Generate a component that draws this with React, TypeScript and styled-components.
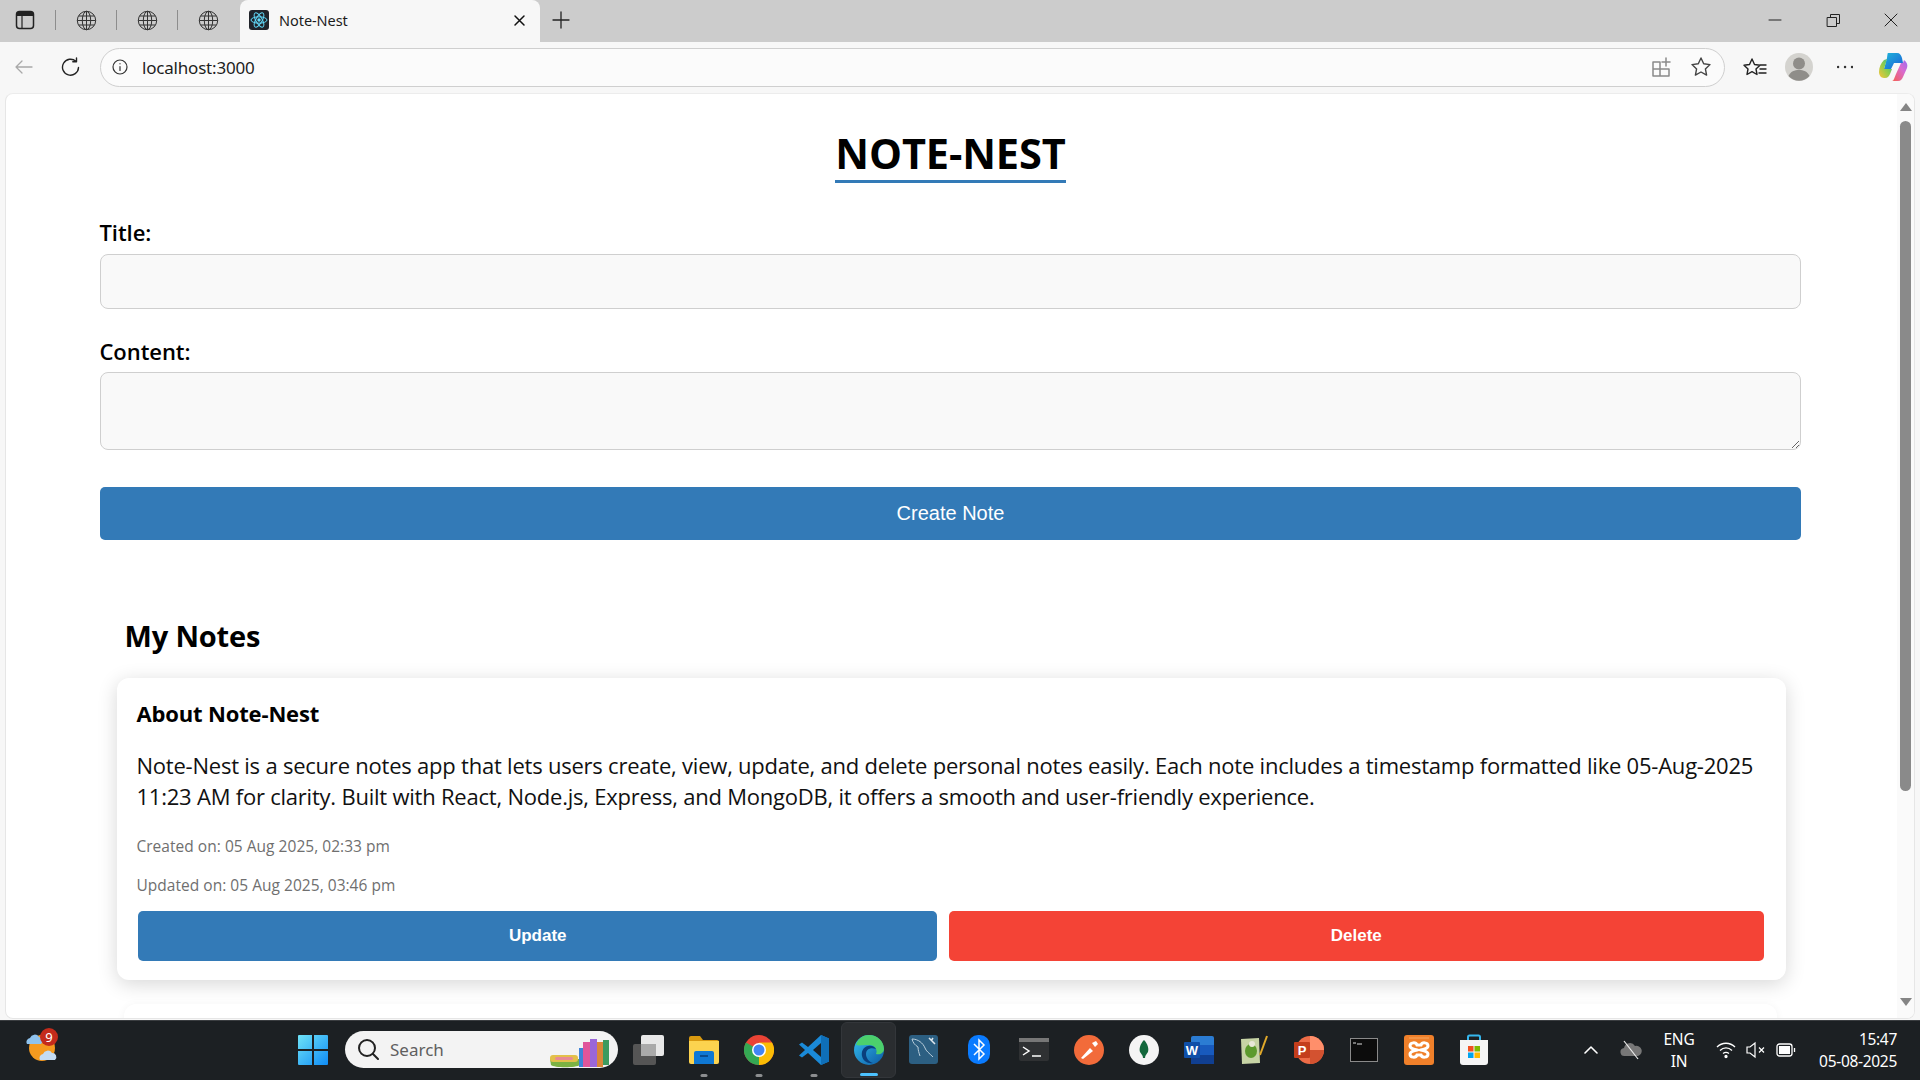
import React from "react";
import styled, { createGlobalStyle } from "styled-components";

const GlobalStyle = createGlobalStyle`
  html, body { margin: 0; padding: 0; width: 1920px; height: 1080px; overflow: hidden; background: #f7f7f7; }
  * { box-sizing: border-box; }
`;

const uiFont = `"Open Sans", "Noto Sans", sans-serif`;
const sysFont = `"Noto Sans", "Open Sans", sans-serif`;
const armFont = `"Liberation Sans", Arial, sans-serif`;

const Screen = styled.div`
  width: 1920px; height: 1080px; display: flex; flex-direction: column; overflow: hidden;
`;

/* tab strip */
const TabStrip = styled.div`
  height: 42px; flex: none; background: #cccccc; display: flex; align-items: stretch; position: relative;
`;
const StripSlot = styled.div<{ $w: number }>`
  width: ${(p) => p.$w}px; flex: none; display: flex; align-items: center; justify-content: center; height: 40px;
`;
const SidebarSlot = styled(StripSlot)`
  padding-right: 5px;
`;
const StripDivider = styled.div`
  width: 1px; height: 20px; background: #8d8d8d; flex: none; align-self: center; margin-bottom: 2px;
`;
const ActiveTab = styled.div`
  width: 300px; height: 42px; flex: none; background: #f7f7f7; border-radius: 8px 8px 0 0; display: flex; align-items: center;
  padding: 0 14px 2px 9px; margin-left: 2px;
`;
const TabTitle = styled.span`
  font: 400 14.5px ${sysFont}; color: #1c1c1c; margin-left: 10px; flex: 1; letter-spacing: -0.05px;
`;
const WindowControls = styled.div`
  margin-left: auto; display: flex; height: 40px; align-items: center; padding-right: 0;
`;
const WindowButton = styled.div`
  width: 58px; display: flex; align-items: center; justify-content: center;
`;

/* toolbar */
const Toolbar = styled.div`
  height: 51px; flex: none; background: #f7f7f7; display: flex; align-items: center; padding: 0 0 1px 0;
`;
const ToolButton = styled.div<{ $w: number }>`
  width: ${(p) => p.$w}px; flex: none; display: flex; align-items: center; justify-content: center;
`;
const AddressBar = styled.div`
  width: 1625px; height: 39px; flex: none; margin-left: 6px; border: 1.5px solid #cfcfcf; border-radius: 20px; background: #fbfbfb;
  display: flex; align-items: center; padding: 0 3px 0 11px;
`;
const Url = styled.span`
  font: 400 17px ${sysFont}; color: #1e1e1e; margin-left: 14px; flex: 1; letter-spacing: -0.2px;
`;

/* viewport */
const ViewportFrame = styled.div`
  flex: none; height: 926px; margin: 0 5px 0 5px; background: #fff; border-radius: 8px; border: 1px solid #e6e6e6; border-top-color: #ececec;
  display: flex; overflow: hidden;
`;
const Page = styled.main`
  flex: 1; min-width: 0; overflow: hidden; display: flex; flex-direction: column; align-items: center; padding: 36px 2px 0 0;
`;
const Container = styled.div`
  width: 90%; display: flex; flex-direction: column; color: #000; font-family: ${uiFont};
`;
const Scrollbar = styled.div`
  width: 17px; flex: none; background: #fafafa; display: flex; flex-direction: column; align-items: center; padding-top: 9px;
`;
const ScrollThumb = styled.div`
  width: 11px; height: 670px; margin-top: 10px; background: #8a8a8a; border-radius: 6px; flex: none;
`;
const ScrollArrow = styled.div<{ $down?: boolean }>`
  width: 0; height: 0; flex: none; border-left: 6.5px solid transparent; border-right: 6.5px solid transparent;
  ${(p) => (p.$down ? "border-top: 8px solid #858585; margin-top: auto; margin-bottom: 12px;" : "border-bottom: 8px solid #858585;")}
`;
const TitleRow = styled.div`
  display: flex; justify-content: center;
`;
const Heading = styled.h1`
  margin: 0; font: 700 41.5px/47px ${uiFont}; letter-spacing: -0.1px; border-bottom: 3px solid #337ab7; padding-bottom: 3px; color: #000;
`;
const Label = styled.label<{ $top: number }>`
  display: block; margin-top: ${(p) => p.$top}px; font: 600 22px/28px ${uiFont}; letter-spacing: -0.05px; color: #000; margin-left: -1px;
`;
const TextInput = styled.input`
  display: block; width: 100%; height: 55px; margin-top: 8px; background: #f9f9f9; border: 1.5px solid #cfcfcf; border-radius: 8px; outline: none;
`;
const TextArea = styled.textarea`
  display: block; width: 100%; height: 78px; margin-top: 7px; background: #f9f9f9; border: 1.5px solid #cfcfcf; border-radius: 8px; outline: none; resize: vertical;
`;
const PrimaryButton = styled.button`
  display: block; width: 100%; height: 53px; margin-top: 37px; border: 0; border-radius: 5px; background: #337ab7; color: #fff; font: 400 20px ${armFont};
`;
const SectionTitle = styled.h2`
  margin: 76px 0 0 24px; font: 700 29px/40px ${uiFont}; letter-spacing: -0.15px; color: #000;
`;
const NoteCard = styled.article`
  margin: 22px 15px 0 17px; background: #fff; border-radius: 12px; padding: 20px 18px 19px 19px; box-shadow: 0 4px 20px rgba(0, 0, 0, 0.16);
`;
const GhostCard = styled.div`
  margin: 24px 24px 0; height: 60px; flex: none; background: #fff; border-radius: 12px; box-shadow: 0 1px 8px rgba(0, 0, 0, 0.05);
`;
const NoteTitle = styled.h3`
  margin: 0; font: 700 22px/30px ${uiFont}; letter-spacing: -0.15px; color: #000;
`;
const NoteBody = styled.p`
  margin: 22px 0 0; font: 400 22px/31px ${uiFont}; letter-spacing: -0.22px; color: #111;
`;
const Stamp = styled.p<{ $top: number }>`
  margin: ${(p) => p.$top}px 0 0; font: 400 15.5px/24px ${uiFont}; color: #6f6f6f; letter-spacing: 0.03px;
`;
const Actions = styled.div`
  display: grid; grid-template-columns: 799fr 815fr; gap: 12px; margin: 14px 0 0 2px; padding-right: 4px;
`;
const ActionButton = styled.button<{ $bg: string }>`
  height: 50px; border: 0; border-radius: 5px; background: ${(p) => p.$bg}; color: #fff; font: 700 17px ${armFont}; padding-bottom: 2px;
`;

/* taskbar */
const Taskbar = styled.footer`
  flex: 1; background: #1c2023; border-top: 1px solid #3a3d40; display: flex; align-items: center; margin-top: 1px; color: #fff; padding-bottom: 2px;
`;
const Weather = styled.div`
  width: 285px; flex: none; padding-left: 25px; display: flex; align-items: center; margin-bottom: 4px;
`;
const TaskSlot = styled.div<{ $active?: boolean }>`
  width: 55px; height: 56px; flex: none; display: flex; align-items: center; justify-content: center; position: relative; border-radius: 6px;
  ${(p) => p.$active && "background: #2a2d30; border: 1px solid #33363a;"}
`;
const RunDot = styled.span<{ $active?: boolean }>`
  position: absolute; bottom: 1px; left: 50%; transform: translateX(-50%); height: 3px; border-radius: 2px;
  width: ${(p) => (p.$active ? 18 : 7)}px; background: ${(p) => (p.$active ? "#4cc2ff" : "#8c8e90")};
`;
const SearchBox = styled.div`
  width: 273px; height: 37px; flex: none; margin: 0 3px 0 5px; border-radius: 19px; background: #f3f3f3; display: flex; align-items: center; padding-left: 13px; overflow: hidden; position: relative;
`;
const SearchText = styled.span`
  font: 400 17px ${sysFont}; color: #5f5f5f; margin-left: 11px; flex: 1;
`;
const Tray = styled.div`
  margin-left: auto; display: flex; align-items: center; color: #fff; padding-right: 23px;
`;
const TrayIcon = styled.div<{ $w: number }>`
  width: ${(p) => p.$w}px; flex: none; display: flex; align-items: center; justify-content: center;
  svg { flex: none; }
`;
const TrayText = styled.div`
  width: 48px; flex: none; text-align: center; font: 400 15.5px/22px ${sysFont}; letter-spacing: -0.2px;
`;
const Clock = styled.div`
  width: 88px; flex: none; text-align: right; font: 400 15.5px/22px ${sysFont}; letter-spacing: -0.3px;
`;

/* icons */
const Globe = () => (
  <svg width="21" height="21" viewBox="0 0 21 21" fill="none" stroke="#333" strokeWidth="1">
    <circle cx="10.5" cy="10.5" r="9.2" />
    <ellipse cx="10.5" cy="10.5" rx="4.2" ry="9.2" />
    <path d="M1.3 10.5h18.4M2.6 6h15.8M2.6 15h15.8M10.5 1.3v18.4" />
  </svg>
);
const SidebarIcon = () => (
  <svg width="20" height="20" viewBox="0 0 20 20" fill="none">
    <rect x="1.5" y="1.5" width="17" height="17" rx="3" stroke="#222" strokeWidth="1.5" />
    <path d="M2 2h16v4H2z" fill="#222" />
    <path d="M7 6v12" stroke="#222" strokeWidth="1.2" />
  </svg>
);
const ReactFav = () => (
  <svg width="20" height="20" viewBox="0 0 20 20" style={{ flex: "none" }}>
    <rect width="20" height="20" rx="3" fill="#20232a" />
    <g fill="none" stroke="#61dafb" strokeWidth="1">
      <ellipse cx="10" cy="10" rx="8" ry="3.2" />
      <ellipse cx="10" cy="10" rx="8" ry="3.2" transform="rotate(60 10 10)" />
      <ellipse cx="10" cy="10" rx="8" ry="3.2" transform="rotate(120 10 10)" />
    </g>
    <circle cx="10" cy="10" r="1.7" fill="#61dafb" />
  </svg>
);
const Line = ({ d, w = 16, h = 16, c = "#222", sw = 1.3 }: { d: string; w?: number; h?: number; c?: string; sw?: number }) => (
  <svg width={w} height={h} viewBox={`0 0 ${w} ${h}`} fill="none" stroke={c} strokeWidth={sw} strokeLinecap="round" strokeLinejoin="round" style={{ flex: "none" }}>
    <path d={d} />
  </svg>
);
const StarPath = "M11 2l2.7 5.8 6.3.8-4.6 4.3 1.2 6.2L11 16l-5.6 3.1 1.2-6.2L2 8.6l6.3-.8z";
const Copilot = () => (
  <svg width="30" height="30" viewBox="0 0 30 30">
    <defs>
      <linearGradient id="cpa" x1="0" y1="0" x2="1" y2="1"><stop offset="0" stopColor="#1fb6d9" /><stop offset="1" stopColor="#1a5fd8" /></linearGradient>
      <linearGradient id="cpb" x1="0" y1="1" x2="1" y2="0"><stop offset="0" stopColor="#f8c43a" /><stop offset=".5" stopColor="#8fce4c" /><stop offset="1" stopColor="#27b3a5" /></linearGradient>
      <linearGradient id="cpc" x1="0" y1="1" x2="1" y2="0"><stop offset="0" stopColor="#f6604f" /><stop offset=".6" stopColor="#d96bd0" /><stop offset="1" stopColor="#9b6cf0" /></linearGradient>
    </defs>
    <path d="M10 1h9c3 0 4 2 5 5l1 5H16l-3 6H6L9 6c.4-3 .5-5 1-5z" fill="url(#cpa)" />
    <path d="M1 20c0-5 2-9 5-12l3-1-3 10h8l-2 5c-1 2-2 4-5 4H6c-3 0-5-3-5-6z" fill="url(#cpb)" />
    <path d="M14 29h6c3 0 4-2 5-4l4-9c1-3 0-6-3-8l-1 3c0 0-1 0-2 0l-5 11-2 5c-.5 1-1 2-2 2z" fill="url(#cpc)" />
  </svg>
);
const Avatar = () => (
  <svg width="28" height="28" viewBox="0 0 28 28">
    <circle cx="14" cy="14" r="14" fill="#d4d3cf" />
    <circle cx="14" cy="10.5" r="6" fill="#8f8d89" />
    <path d="M3.5 23c2-4.5 6-6 10.500-6s8.500 1.500 10.500 6a14 14 0 0 1-21 0z" fill="#8f8d89" />
  </svg>
);
const WeatherIcon = () => (
  <svg width="36" height="40" viewBox="0 0 36 40">
    <circle cx="17" cy="20" r="13" fill="#f59a1f" />
    <path d="M2 16a4 4 0 0 1 3-6 5 5 0 0 1 9-1 4 4 0 0 1 2 7z" fill="#8fc3ee" />
    <path d="M15 32a4 4 0 0 1 3-6 5 5 0 0 1 9-1 4 4 0 0 1 3 7z" fill="#c4dcf3" />
    <circle cx="24" cy="9" r="9" fill="#c42b1c" />
    <text x="24" y="13.500" textAnchor="middle" fontSize="13" fontFamily="Noto Sans" fill="#fff">9</text>
  </svg>
);
const Windows = () => (
  <svg width="30" height="30" viewBox="0 0 30 30">
    <defs><linearGradient id="w" x1="0" y1="0" x2="1" y2="1"><stop offset="0" stopColor="#6fe3f7" /><stop offset="1" stopColor="#0f8cf5" /></linearGradient></defs>
    <path d="M0 1a1 1 0 0 1 1-1h13v14H0zM16 0h13a1 1 0 0 1 1 1v13H16zM0 16h14v14H1a1 1 0 0 1-1-1zM16 16h14v13a1 1 0 0 1-1 1H16z" fill="url(#w)" />
  </svg>
);
const TaskView = () => (
  <svg width="32" height="30" viewBox="0 0 32 30">
    <rect x="0" y="9" width="23" height="21" rx="2" fill="#555" />
    <rect x="8" y="0" width="23" height="21" rx="2" fill="#e8e8e8" />
    <rect x="8" y="9" width="15" height="12" fill="#aaa" />
  </svg>
);
const Files = () => (
  <svg width="30" height="28" viewBox="0 0 30 28">
    <path d="M0 2a2 2 0 0 1 2-2h9l3 4h14a2 2 0 0 1 2 2v3H0z" fill="#d99a10" />
    <path d="M0 5h30v21a2 2 0 0 1-2 2H2a2 2 0 0 1-2-2z" fill="#fcd34f" />
    <path d="M5 17a2 2 0 0 1 2-2h16a2 2 0 0 1 2 2v11H5z" fill="#0f78d4" />
    <path d="M11 20h8" stroke="#083e78" strokeWidth="1.500" />
  </svg>
);
const Chrome = () => (
  <svg width="30" height="30" viewBox="0 0 30 30">
    <circle cx="15" cy="15" r="15" fill="#ea4335" />
    <path d="M15 15L2 7.500A15 15 0 0 0 15 30z" fill="#34a853" />
    <path d="M15 15l0 15A15 15 0 0 0 28 7.500H15z" fill="#fbbc05" />
    <circle cx="15" cy="15" r="7" fill="#fff" />
    <circle cx="15" cy="15" r="5.500" fill="#4285f4" />
  </svg>
);
const VSCode = () => (
  <svg width="30" height="30" viewBox="0 0 30 30">
    <path d="M22 0l8 3.500v23L22 30 9 18l-6 4.500L0 20.500 6 15 0 9.500 3 7.500 9 12z" fill="#1a8ad8" />
    <path d="M22 8l-8 7 8 7z" fill="#1c2023" />
    <path d="M22 0l8 3.500v23L22 30z" fill="#0f6fb8" />
  </svg>
);
const Edge = () => (
  <svg width="30" height="30" viewBox="0 0 30 30">
    <defs>
      <linearGradient id="eg" x1="0" y1="0" x2="1" y2="1"><stop offset="0" stopColor="#35c1f1" /><stop offset="1" stopColor="#0c59a4" /></linearGradient>
    </defs>
    <circle cx="15" cy="15" r="15" fill="url(#eg)" />
    <path d="M2 10C4 3 10 0 15 0c8 0 15 6 15 14 0 4-4 6-8 5 2-4-1-9-7-9-6 0-10 1-13 0z" fill="#4cd06c" />
    <path d="M12 19c0-5 5-7 10-5-1-2-4-4-8-3-5 1-7 6-6 10 1 5 6 8 11 7-4-1-7-5-7-9z" fill="#0a3f7d" />
  </svg>
);
const MySql = () => (
  <svg width="29" height="29" viewBox="0 0 29 29">
    <rect width="29" height="29" rx="3" fill="#2c5f82" />
    <path d="M3 4c6 0 11 4 13 9 1 3 4 5 8 9M3 4c1 4 3 6 6 8 0 3 1 6 2 9" fill="none" stroke="#b8cddb" strokeWidth="1" />
    <path d="M20 3l6 6M24 3l-2 3" stroke="#e0e8ee" strokeWidth="1.500" />
  </svg>
);
const Bluetooth = () => (
  <svg width="22" height="29" viewBox="0 0 22 29">
    <rect width="22" height="29" rx="10" fill="#0a7bff" />
    <path d="M6 9l10 10-5 5V5l5 5L6 20" fill="none" stroke="#fff" strokeWidth="1.500" />
  </svg>
);
const Terminal = () => (
  <svg width="30" height="23" viewBox="0 0 30 23">
    <rect width="30" height="23" rx="2" fill="#2f3133" />
    <rect width="30" height="4" fill="#777" />
    <path d="M4 9l6 4-6 4" fill="none" stroke="#fff" strokeWidth="1.500" />
    <path d="M13 18h9" stroke="#fff" strokeWidth="1.500" />
  </svg>
);
const Postman = () => (
  <svg width="30" height="30" viewBox="0 0 30 30">
    <circle cx="15" cy="15" r="15" fill="#f26b3a" />
    <path d="M7 23l9-10 3 3-10 8zM18 8l4-2 2 3-3 3z" fill="#fff" />
  </svg>
);
const Mongo = () => (
  <svg width="30" height="30" viewBox="0 0 30 30">
    <circle cx="15" cy="15" r="15" fill="#f4f4f4" />
    <path d="M15 5c4 4 5 9 4 12-1 2-3 3-3 6h-2c0-3-2-4-3-6-1-3 0-8 4-12z" fill="#13683c" />
  </svg>
);
const Word = () => (
  <svg width="30" height="28" viewBox="0 0 30 28">
    <rect x="7" width="23" height="28" rx="2" fill="#2b7cd3" />
    <rect x="7" y="9" width="23" height="10" fill="#185abd" />
    <rect x="7" y="19" width="23" height="9" fill="#103f91" />
    <rect x="0" y="6" width="16" height="16" rx="1" fill="#0f4fa8" />
    <text x="8" y="19" textAnchor="middle" fontSize="13" fontWeight="700" fontFamily="Liberation Sans" fill="#fff">W</text>
  </svg>
);
const NotepadPP = () => (
  <svg width="30" height="30" viewBox="0 0 30 30">
    <path d="M2 4l18-1 1 25-18 1z" fill="#c7d4a5" />
    <ellipse cx="12" cy="16" rx="6" ry="7" fill="#5c9a2d" />
    <circle cx="13" cy="9" r="3" fill="#e8e8d8" />
    <path d="M21 20L28 1" stroke="#e1a92a" strokeWidth="2" />
  </svg>
);
const Ppt = () => (
  <svg width="30" height="30" viewBox="0 0 30 30">
    <circle cx="16" cy="15" r="14" fill="#ed6c47" />
    <path d="M16 1a14 14 0 0 1 14 14H16z" fill="#ff8f6b" />
    <path d="M16 29a14 14 0 0 0 14-14H16z" fill="#d35230" />
    <rect x="0" y="7" width="16" height="16" rx="1" fill="#c43e1c" />
    <text x="8" y="20" textAnchor="middle" fontSize="13" fontWeight="700" fontFamily="Liberation Sans" fill="#fff">P</text>
  </svg>
);
const Cmd = () => (
  <svg width="28" height="24" viewBox="0 0 28 24">
    <rect width="28" height="24" fill="#8a8a8a" />
    <rect x="1" y="1" width="26" height="22" fill="#0c0c0c" />
    <path d="M3 5h3M7 6h5" stroke="#ddd" strokeWidth="1" />
  </svg>
);
const Xampp = () => (
  <svg width="30" height="30" viewBox="0 0 30 30">
    <rect width="30" height="30" rx="3" fill="#f0802a" />
    <path d="M5 3h20" stroke="#f8a860" strokeWidth="1" />
    <path d="M13 10c-1-3-7-3-7 1 0 3 4 3 7 4-3 1-7 1-7 4 0 4 6 4 7 1h4c1 3 7 3 7-1 0-3-4-3-7-4 3-1 7-1 7-4 0-4-6-4-7-1z" fill="none" stroke="#fff" strokeWidth="3" />
  </svg>
);
const Store = () => (
  <svg width="30" height="31" viewBox="0 0 30 31">
    <path d="M9 7V3a1.500 1.500 0 0 1 1.500-1.500h9A1.500 1.500 0 0 1 21 3v4" fill="none" stroke="#35b7ee" strokeWidth="2" />
    <path d="M1 6h28v22a3 3 0 0 1-3 3H4a3 3 0 0 1-3-3z" fill="#f5f5f5" />
    <rect x="9" y="12" width="5.500" height="5.500" fill="#f25022" />
    <rect x="15.500" y="12" width="5.500" height="5.500" fill="#7fba00" />
    <rect x="9" y="18.500" width="5.500" height="5.500" fill="#00a4ef" />
    <rect x="15.500" y="18.500" width="5.500" height="5.500" fill="#ffb900" />
  </svg>
);
const Books = () => (
  <svg width="66" height="37" viewBox="0 0 66 37" style={{ position: "absolute", right: 2, top: 0 }}>
    <path d="M0 28h30v6c-4 3-26 3-29 0z" fill="#7cb342" />
    <rect x="0" y="24" width="28" height="7" rx="3" fill="#e3c04a" />
    <rect x="5" y="26" width="18" height="3" rx="1.500" fill="#e88a94" />
    <rect x="29" y="17" width="4" height="19" fill="#3f83d8" />
    <rect x="33" y="11" width="7" height="25" fill="#e0559a" />
    <rect x="40" y="8" width="7" height="28" fill="#9a66d8" />
    <rect x="47" y="11" width="6" height="25" fill="#d9873a" />
    <rect x="53" y="9" width="6" height="25" fill="#3d9b5f" />
  </svg>
);

const taskApps: { key: string; icon: React.ReactNode; dot?: boolean; active?: boolean }[] = [
  { key: "task", icon: <TaskView /> },
  { key: "files", icon: <Files />, dot: true },
  { key: "chrome", icon: <Chrome />, dot: true },
  { key: "vscode", icon: <VSCode />, dot: true },
  { key: "edge", icon: <Edge />, active: true },
  { key: "mysql", icon: <MySql /> },
  { key: "bt", icon: <Bluetooth /> },
  { key: "term", icon: <Terminal /> },
  { key: "postman", icon: <Postman /> },
  { key: "mongo", icon: <Mongo /> },
  { key: "word", icon: <Word /> },
  { key: "npp", icon: <NotepadPP /> },
  { key: "ppt", icon: <Ppt /> },
  { key: "cmd", icon: <Cmd /> },
  { key: "xampp", icon: <Xampp /> },
  { key: "store", icon: <Store /> },
];

export default function App() {
  return (
    <Screen>
      <GlobalStyle />
      <TabStrip>
        <SidebarSlot $w={55}><SidebarIcon /></SidebarSlot>
        <StripDivider />
        <StripSlot $w={60}><Globe /></StripSlot>
        <StripDivider />
        <StripSlot $w={60}><Globe /></StripSlot>
        <StripDivider />
        <StripSlot $w={60}><Globe /></StripSlot>
        <ActiveTab>
          <ReactFav />
          <TabTitle>Note-Nest</TabTitle>
          <Line d="M2 2l9 9M11 2l-9 9" w={13} h={13} c="#111" sw={1.5} />
        </ActiveTab>
        <StripSlot $w={42}><Line d="M9 1v16M1 9h16" w={18} h={18} c="#222" sw={1.3} /></StripSlot>
        <WindowControls>
          <WindowButton><Line d="M1 1h12" w={14} h={2} c="#222" sw={1} /></WindowButton>
          <WindowButton><Line d="M1.500 4.500h9v9h-9zM4.500 4V1.500h9v9H11" w={15} h={15} c="#222" sw={1} /></WindowButton>
          <WindowButton><Line d="M1 1l12 12M13 1L1 13" w={14} h={14} c="#222" sw={1} /></WindowButton>
        </WindowControls>
      </TabStrip>
      <Toolbar>
        <ToolButton $w={48}><Line d="M18 9H2M8 3L2 9l6 6" w={20} h={18} c="#a9a9a9" sw={1.3} /></ToolButton>
        <ToolButton $w={46}><Line d="M17.500 10.500a8 8 0 1 1-2.500-6.100M15.500 1v3.700H11.800" w={21} h={21} c="#222" sw={1.4} /></ToolButton>
        <AddressBar>
          <Line d="M8 7.500v4M8 4.700v.1M15 8A7 7 0 1 1 1 8a7 7 0 0 1 14 0z" w={16} h={16} c="#333" sw={1.2} />
          <Url>localhost:3000</Url>
          <ToolButton $w={40}><Line d="M2 5h7v7H2zM2 12h7v7H2zM9 12h9v7H9zM15 1v8M11 5h8" w={20} h={20} c="#8b8b8b" sw={1.5} /></ToolButton>
          <ToolButton $w={40}><Line d={StarPath} w={22} h={22} c="#444" sw={1.4} /></ToolButton>
        </AddressBar>
        <ToolButton $w={58}><Line d="M10 2l2.500 5.500 5.500.7-4 3.800 1 5.500-5-2.800-5 2.800 1-5.500-4-3.800 5.500-.7zM18 8h6M18 12h6M17 16h7" w={25} h={20} c="#222" sw={1.4} /></ToolButton>
        <ToolButton $w={32}><Avatar /></ToolButton>
        <ToolButton $w={60}><Line d="M1 2h.1M8 2h.1M15 2h.1" w={16} h={4} c="#333" sw={2.4} /></ToolButton>
        <ToolButton $w={36}><Copilot /></ToolButton>
      </Toolbar>
      <ViewportFrame>
        <Page>
          <Container>
            <TitleRow><Heading>NOTE-NEST</Heading></TitleRow>
            <Label $top={35}>Title:</Label>
            <TextInput />
            <Label $top={28}>Content:</Label>
            <TextArea />
            <PrimaryButton>Create Note</PrimaryButton>
            <SectionTitle>My Notes</SectionTitle>
            <NoteCard>
              <NoteTitle>About Note-Nest</NoteTitle>
              <NoteBody>
                Note-Nest is a secure notes app that lets users create, view, update, and delete personal notes easily. Each note includes a timestamp formatted like 05-Aug-2025 11:23 AM for clarity. Built with React, Node.js, Express, and MongoDB, it offers a smooth and user-friendly experience.
              </NoteBody>
              <Stamp $top={22}>Created on: 05 Aug 2025, 02:33 pm</Stamp>
              <Stamp $top={15}>Updated on: 05 Aug 2025, 03:46 pm</Stamp>
              <Actions>
                <ActionButton $bg="#337ab7">Update</ActionButton>
                <ActionButton $bg="#f44336">Delete</ActionButton>
              </Actions>
            </NoteCard>
            <GhostCard />
          </Container>
        </Page>
        <Scrollbar>
          <ScrollArrow />
          <ScrollThumb />
          <ScrollArrow $down />
        </Scrollbar>
      </ViewportFrame>
      <Taskbar>
        <Weather><WeatherIcon /></Weather>
        <TaskSlot><Windows /></TaskSlot>
        <SearchBox>
          <Line d="M15 15l5 5M17 9A8 8 0 1 1 1 9a8 8 0 0 1 16 0z" w={21} h={21} c="#222" sw={2} />
          <SearchText>Search</SearchText>
          <Books />
        </SearchBox>
        {taskApps.map((a) => (
          <TaskSlot key={a.key} $active={a.active}>
            {a.icon}
            {(a.dot || a.active) && <RunDot $active={a.active} />}
          </TaskSlot>
        ))}
        <Tray>
          <TrayIcon $w={32}><Line d="M1 8l6-6 6 6" w={14} h={10} c="#fff" sw={1.6} /></TrayIcon>
          <TrayIcon $w={48}>
            <svg width="22" height="22" viewBox="0 0 22 22"><path d="M5 17a4 4 0 0 1-1-8 6 6 0 0 1 11-2 5 5 0 0 1 3 10z" fill="#777" /><path d="M4 2l14 18" stroke="#eee" strokeWidth="1.200" /></svg>
          </TrayIcon>
          <TrayText>ENG<br />IN</TrayText>
          <TrayIcon $w={46}>
            <svg width="20" height="18" viewBox="0 0 20 18" fill="none" stroke="#fff" strokeWidth="1.300"><path d="M1 6c5-5 13-5 18 0M4 9.500c3.500-3.500 8.500-3.500 12 0M7 12.500c2-1.500 4-1.500 6 0" /><circle cx="10" cy="15.500" r="1" fill="#fff" /></svg>
          </TrayIcon>
          <TrayIcon $w={14}>
            <svg width="20" height="18" viewBox="0 0 20 18" fill="none" stroke="#fff" strokeWidth="1.200"><path d="M1 6h3l5-4v14l-5-4H1zM13 6.500l5 5M18 6.500l-5 5" /></svg>
          </TrayIcon>
          <TrayIcon $w={46}>
            <svg width="20" height="14" viewBox="0 0 20 14" fill="none" stroke="#fff" strokeWidth="1.300"><rect x="1" y="1" width="15" height="12" rx="2.500" /><rect x="3" y="3" width="11" height="8" fill="#fff" stroke="none" /><path d="M18.500 5v4" /></svg>
          </TrayIcon>
          <Clock>15:47<br />05-08-2025</Clock>
        </Tray>
      </Taskbar>
    </Screen>
  );
}
